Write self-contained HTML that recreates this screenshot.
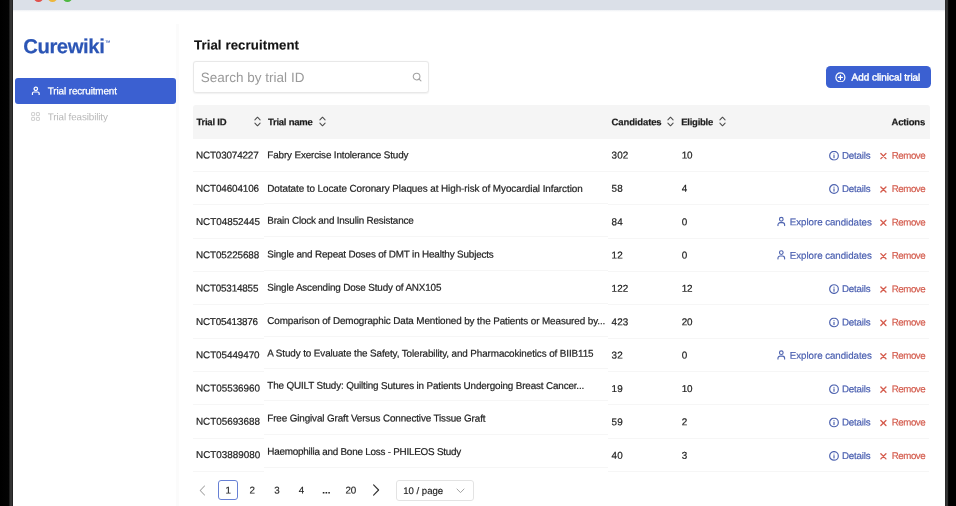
<!DOCTYPE html>
<html lang="en"><head><meta charset="utf-8"><title>Curewiki - Trial recruitment</title>
<style>
*{box-sizing:border-box;margin:0;padding:0}
html,body{width:956px;height:506px;overflow:hidden;background:#fff}
body{position:relative;font-family:"Liberation Sans",Arial,sans-serif;font-size:9.9px;color:#222}
.wrap{position:absolute;left:0;top:0;width:956px;height:506px;overflow:hidden;will-change:transform}
.abs{position:absolute}
.bl{position:absolute;left:0;top:0;width:13px;height:506px;background:linear-gradient(90deg,#000 0,#030303 8.8px,#333 10px,#343434 11.8px,#242424 12.2px,#222 13px)}
.br{position:absolute;left:945px;top:0;width:11px;height:506px;background:linear-gradient(90deg,#2a2a2a 0,#2c2c2c 0.9px,#353535 1.3px,#343434 2.4px,#080808 3.3px,#000 4.2px,#000 11px)}
.tb{position:absolute;left:13px;top:0;width:932px;height:9.5px;background:#dbe0e8}
.tl{position:absolute;top:-6.8px;width:8.6px;height:8.6px;border-radius:50%}
.side{position:absolute;left:176px;top:24px;width:3.4px;height:482px;background:#fbfbfb}
.tb2{position:absolute;left:13px;top:9.5px;width:932px;height:2.5px;background:linear-gradient(180deg,#eef1f5,#fff)}
.logo{position:absolute;font-weight:bold;font-size:20.3px;line-height:24px;color:#2b55b5;white-space:nowrap}
.tm{position:absolute;font-size:3.4px;line-height:4px;font-weight:bold;color:#2b55b5;letter-spacing:0}
.nav1{position:absolute;left:15.4px;top:77.6px;width:160.2px;height:26.2px;border-radius:3px;background:#3b60d1}
.navt{position:absolute;white-space:nowrap;line-height:12px}
.h1{position:absolute;font-size:13.2px;line-height:16px;font-weight:bold;color:#141414;white-space:nowrap;-webkit-text-stroke:0.15px #141414}
.search{position:absolute;left:193.4px;top:61.3px;width:235.8px;height:31.7px;border:1px solid #e8e8e8;border-radius:3px;background:#fff;box-shadow:0 0.5px 1.5px rgba(0,0,0,.06)}
.ph{position:absolute;font-size:13.5px;line-height:16px;color:#9a9a9a;white-space:nowrap}
.btn{position:absolute;left:825.8px;top:66.1px;width:105.2px;height:21.9px;border-radius:4.5px;background:#3b60d1}
.btnt{position:absolute;line-height:12px;color:#fff;white-space:nowrap;-webkit-text-stroke:0.4px #fff}
.thead{position:absolute;left:193.3px;top:105.1px;width:736.9px;height:33.7px;background:#f5f5f5;border-radius:3px 3px 0 0}
.th{position:absolute;font-weight:bold;font-size:9.5px;line-height:12px;color:#1c1c1c;white-space:nowrap;-webkit-text-stroke:0.2px #1c1c1c}
.sort{position:absolute;top:116.4px}
.line{position:absolute;height:1px;background:#f6f6f6}
.c{position:absolute;white-space:nowrap;line-height:12px;color:#222;-webkit-text-stroke:0.2px #222}
.cd{letter-spacing:0.05px}
.el{letter-spacing:-0.1px}
.act{position:absolute;white-space:nowrap;line-height:12px;font-size:9.7px;display:flex;align-items:center;justify-content:flex-end}
.act .ic{margin-right:3.4px;flex:none}
.act .xi{margin-right:5.3px}
.bluet{color:#4a5fb0;-webkit-text-stroke:0.2px #4a5fb0}
.redt{color:#d45f51;-webkit-text-stroke:0.2px #d45f51}
.gap{display:inline-block;width:9.2px}
.pg{position:absolute;line-height:12px;font-size:9.8px;color:#222;white-space:nowrap;-webkit-text-stroke:0.15px #222}
</style></head><body><div class="wrap">
<div class="tb"></div>
<div class="tl" style="left:34.2px;background:#e0524d"></div>
<div class="tl" style="left:48px;background:#edb73c"></div>
<div class="tl" style="left:63.2px;background:#4fb840"></div>
<div class="bl"></div><div class="br"></div>
<div class="side"></div><div class="tb2"></div>
<div class="logo" style="left:23px;top:34px;transform:matrix(1,0.0007,0,1,0.20,0.18);letter-spacing:-0.421px;-webkit-text-stroke:0.2px #2b55b5">Curewiki</div><div class="tm" style="left:105px;top:39px;transform:matrix(1,0.0007,0,1,0.20,0.67);">TM</div>
<div class="nav1"></div>
<div class="abs" style="left:31.2px;top:85.8px;width:9.6px;height:9.6px"><svg class="ic" width="9.6" height="9.6" viewBox="0 0 24 24" fill="none" stroke="#fff" stroke-width="3.0" stroke-linecap="round" stroke-linejoin="round" style="display:block"><circle cx="12" cy="7" r="4.3"/><path d="M3.6 22v-3.4a3.6 3.6 0 0 1 3.6-3.6h9.6a3.6 3.6 0 0 1 3.6 3.6v3.4"/></svg></div>
<div class="navt" style="left:47px;top:85px;transform:matrix(1,0.0007,0,1,0.80,0.31);color:#fff;-webkit-text-stroke:0.25px #fff;letter-spacing:-0.111px">Trial recruitment</div>
<svg class="abs" style="left:31px;top:111.8px" width="9" height="9" viewBox="0 0 9 9" fill="none" stroke="#c6c6c6" stroke-width="0.85"><rect x="0.6" y="0.6" width="3" height="3" rx="0.4"/><rect x="5.4" y="0.6" width="3" height="3" rx="0.4"/><rect x="0.6" y="5.4" width="3" height="3" rx="0.4"/><rect x="5.4" y="5.4" width="3" height="3" rx="0.4"/></svg>
<div class="navt" style="left:47px;top:111px;transform:matrix(1,0.0007,0,1,0.80,0.21);color:#b8b8b8;letter-spacing:-0.131px">Trial feasibility</div>
<div class="h1" style="left:194px;top:37px;transform:matrix(1,0.0007,0,1,0.00,0.44);letter-spacing:0.104px">Trial recruitment</div>
<div class="search"></div><div class="ph" style="left:200px;top:69px;transform:matrix(1,0.0007,0,1,0.70,0.94);letter-spacing:0.009px">Search by trial ID</div>
<svg class="abs" style="left:411.8px;top:72.4px" width="10" height="10" viewBox="0 0 24 24" fill="none" stroke="#a3a3a3" stroke-width="2.6" stroke-linecap="round"><circle cx="11" cy="11" r="8"/><path d="M17 17L21.5 21.5"/></svg>
<div class="btn"></div>
<svg class="abs" style="left:835.3px;top:71.7px" width="10.8" height="10.8" viewBox="0 0 24 24" fill="none" stroke="#fff" stroke-width="2.7" stroke-linecap="round"><circle cx="12" cy="12" r="10"/><path d="M12 7.5v9M7.5 12h9"/></svg>
<div class="btnt" style="left:851px;top:71px;transform:matrix(1,0.0007,0,1,0.60,0.61);letter-spacing:0.005px">Add clinical trial</div>
<div class="thead"></div>
<div class="th" style="left:196px;top:116px;transform:matrix(1,0.0007,0,1,0.40,0.17);letter-spacing:-0.227px">Trial ID</div><svg class="sort" style="left:253.6px" width="7" height="11" viewBox="0 0 7 11"><path d="M0.9 3.9 L3.5 1.2 L6.1 3.9 M0.9 7.1 L3.5 9.8 L6.1 7.1" fill="none" stroke="#4d4d4d" stroke-width="1.05" stroke-linecap="round" stroke-linejoin="round"/></svg><div class="th" style="left:267px;top:116px;transform:matrix(1,0.0007,0,1,0.90,0.17);letter-spacing:-0.233px">Trial name</div><svg class="sort" style="left:319px" width="7" height="11" viewBox="0 0 7 11"><path d="M0.9 3.9 L3.5 1.2 L6.1 3.9 M0.9 7.1 L3.5 9.8 L6.1 7.1" fill="none" stroke="#4d4d4d" stroke-width="1.05" stroke-linecap="round" stroke-linejoin="round"/></svg><div class="th" style="left:611px;top:116px;transform:matrix(1,0.0007,0,1,0.60,0.17);letter-spacing:-0.135px">Candidates</div><svg class="sort" style="left:667px" width="7" height="11" viewBox="0 0 7 11"><path d="M0.9 3.9 L3.5 1.2 L6.1 3.9 M0.9 7.1 L3.5 9.8 L6.1 7.1" fill="none" stroke="#4d4d4d" stroke-width="1.05" stroke-linecap="round" stroke-linejoin="round"/></svg><div class="th" style="left:681px;top:116px;transform:matrix(1,0.0007,0,1,0.20,0.17);letter-spacing:-0.242px">Eligible</div><svg class="sort" style="left:718.5px" width="7" height="11" viewBox="0 0 7 11"><path d="M0.9 3.9 L3.5 1.2 L6.1 3.9 M0.9 7.1 L3.5 9.8 L6.1 7.1" fill="none" stroke="#4d4d4d" stroke-width="1.05" stroke-linecap="round" stroke-linejoin="round"/></svg><div class="th" style="left:891px;top:116px;transform:matrix(1,0.0007,0,1,0.60,0.17);letter-spacing:-0.207px">Actions</div>
<div class="c id" style="left:196px;top:149px;transform:matrix(1,0.0007,0,1,0.00,0.41);letter-spacing:-0.153px">NCT03074227</div><div class="c nm" style="left:267px;top:149px;transform:matrix(1,0.0007,0,1,0.30,0.31);letter-spacing:-0.137px">Fabry Exercise Intolerance Study</div><div class="c cd" style="left:611px;top:149px;transform:matrix(1,0.0007,0,1,0.60,0.41);">302</div><div class="c el" style="left:681px;top:149px;transform:matrix(1,0.0007,0,1,0.70,0.41);">10</div><div class="act" style="left:700px;width:225.6px;top:149px;transform:matrix(1,0.0007,0,1,0,0.64);"><svg class="ic" width="10" height="10" viewBox="0 0 24 24" fill="none" stroke="#4f64b0" stroke-width="2.9" stroke-linecap="round" stroke-linejoin="round"><circle cx="12" cy="12" r="10.4"/><path d="M12 17v-5.5M12 7.5h.01"/></svg><span class="bluet" style="letter-spacing:-0.154px">Details</span><span class="gap"></span><svg class="ic xi" width="6.8" height="6.8" viewBox="0 0 24 24" fill="none" stroke="#d55d4f" stroke-width="4.8" style="overflow:visible" stroke-linecap="round"><path d="M3 3l18 18M21 3L3 21"/></svg><span class="redt" style="letter-spacing:-0.456px;margin-right:0.456px">Remove</span></div><div class="line" style="left:193.3px;width:71.1px;top:171.0px"></div><div class="line" style="left:264.4px;width:343.6px;top:171.0px"></div><div class="line" style="left:608px;width:321px;top:171.0px"></div>
<div class="c id" style="left:196px;top:182px;transform:matrix(1,0.0007,0,1,0.00,0.71);letter-spacing:-0.123px">NCT04604106</div><div class="c nm" style="left:267px;top:182px;transform:matrix(1,0.0007,0,1,0.30,0.81);letter-spacing:-0.064px">Dotatate to Locate Coronary Plaques at High-risk of Myocardial Infarction</div><div class="c cd" style="left:611px;top:182px;transform:matrix(1,0.0007,0,1,0.60,0.77);">58</div><div class="c el" style="left:681px;top:182px;transform:matrix(1,0.0007,0,1,0.70,0.77);">4</div><div class="act" style="left:700px;width:225.6px;top:182px;transform:matrix(1,0.0007,0,1,0,1.00);"><svg class="ic" width="10" height="10" viewBox="0 0 24 24" fill="none" stroke="#4f64b0" stroke-width="2.9" stroke-linecap="round" stroke-linejoin="round"><circle cx="12" cy="12" r="10.4"/><path d="M12 17v-5.5M12 7.5h.01"/></svg><span class="bluet" style="letter-spacing:-0.154px">Details</span><span class="gap"></span><svg class="ic xi" width="6.8" height="6.8" viewBox="0 0 24 24" fill="none" stroke="#d55d4f" stroke-width="4.8" style="overflow:visible" stroke-linecap="round"><path d="M3 3l18 18M21 3L3 21"/></svg><span class="redt" style="letter-spacing:-0.456px;margin-right:0.456px">Remove</span></div><div class="line" style="left:193.3px;width:71.1px;top:204.3px"></div><div class="line" style="left:264.4px;width:343.6px;top:203.3px"></div><div class="line" style="left:608px;width:321px;top:204.3px"></div>
<div class="c id" style="left:196px;top:216px;transform:matrix(1,0.0007,0,1,0.00,0.01);letter-spacing:-0.023px">NCT04852445</div><div class="c nm" style="left:267px;top:214px;transform:matrix(1,0.0007,0,1,0.30,0.81);letter-spacing:-0.188px">Brain Clock and Insulin Resistance</div><div class="c cd" style="left:611px;top:216px;transform:matrix(1,0.0007,0,1,0.60,0.13);">84</div><div class="c el" style="left:681px;top:216px;transform:matrix(1,0.0007,0,1,0.70,0.13);">0</div><div class="act" style="left:700px;width:225.6px;top:216px;transform:matrix(1,0.0007,0,1,0,0.36);"><svg class="ic" width="8.6" height="10" viewBox="0 0 20 24" fill="none" stroke="#4f64b0" stroke-width="2.7" stroke-linecap="round" stroke-linejoin="round" style="margin-right:3.9px;position:relative;top:-0.8px"><circle cx="10" cy="7" r="4.4"/><path d="M2 22.6v-2.2a5.2 5.2 0 0 1 5.2-5.2h5.6a5.2 5.2 0 0 1 5.2 5.2v2.2"/></svg><span class="bluet" style="letter-spacing:-0.024px;margin-right:-1.3px">Explore candidates</span><span class="gap"></span><svg class="ic xi" width="6.8" height="6.8" viewBox="0 0 24 24" fill="none" stroke="#d55d4f" stroke-width="4.8" style="overflow:visible" stroke-linecap="round"><path d="M3 3l18 18M21 3L3 21"/></svg><span class="redt" style="letter-spacing:-0.456px;margin-right:0.456px">Remove</span></div><div class="line" style="left:193.3px;width:71.1px;top:237.7px"></div><div class="line" style="left:264.4px;width:343.6px;top:236.4px"></div><div class="line" style="left:608px;width:321px;top:237.7px"></div>
<div class="c id" style="left:196px;top:249px;transform:matrix(1,0.0007,0,1,0.00,0.31);letter-spacing:-0.103px">NCT05225688</div><div class="c nm" style="left:267px;top:248px;transform:matrix(1,0.0007,0,1,0.30,0.56);letter-spacing:-0.157px">Single and Repeat Doses of DMT in Healthy Subjects</div><div class="c cd" style="left:611px;top:249px;transform:matrix(1,0.0007,0,1,0.60,0.49);">12</div><div class="c el" style="left:681px;top:249px;transform:matrix(1,0.0007,0,1,0.70,0.49);">0</div><div class="act" style="left:700px;width:225.6px;top:249px;transform:matrix(1,0.0007,0,1,0,0.72);"><svg class="ic" width="8.6" height="10" viewBox="0 0 20 24" fill="none" stroke="#4f64b0" stroke-width="2.7" stroke-linecap="round" stroke-linejoin="round" style="margin-right:3.9px;position:relative;top:-0.8px"><circle cx="10" cy="7" r="4.4"/><path d="M2 22.6v-2.2a5.2 5.2 0 0 1 5.2-5.2h5.6a5.2 5.2 0 0 1 5.2 5.2v2.2"/></svg><span class="bluet" style="letter-spacing:-0.024px;margin-right:-1.3px">Explore candidates</span><span class="gap"></span><svg class="ic xi" width="6.8" height="6.8" viewBox="0 0 24 24" fill="none" stroke="#d55d4f" stroke-width="4.8" style="overflow:visible" stroke-linecap="round"><path d="M3 3l18 18M21 3L3 21"/></svg><span class="redt" style="letter-spacing:-0.456px;margin-right:0.456px">Remove</span></div><div class="line" style="left:193.3px;width:71.1px;top:271.0px"></div><div class="line" style="left:264.4px;width:343.6px;top:269.6px"></div><div class="line" style="left:608px;width:321px;top:271.0px"></div>
<div class="c id" style="left:196px;top:282px;transform:matrix(1,0.0007,0,1,0.00,0.61);letter-spacing:-0.183px">NCT05314855</div><div class="c nm" style="left:267px;top:281px;transform:matrix(1,0.0007,0,1,0.30,0.81);letter-spacing:-0.150px">Single Ascending Dose Study of ANX105</div><div class="c cd" style="left:611px;top:282px;transform:matrix(1,0.0007,0,1,0.60,0.85);">122</div><div class="c el" style="left:681px;top:282px;transform:matrix(1,0.0007,0,1,0.70,0.85);">12</div><div class="act" style="left:700px;width:225.6px;top:283px;transform:matrix(1,0.0007,0,1,0,0.08);"><svg class="ic" width="10" height="10" viewBox="0 0 24 24" fill="none" stroke="#4f64b0" stroke-width="2.9" stroke-linecap="round" stroke-linejoin="round"><circle cx="12" cy="12" r="10.4"/><path d="M12 17v-5.5M12 7.5h.01"/></svg><span class="bluet" style="letter-spacing:-0.154px">Details</span><span class="gap"></span><svg class="ic xi" width="6.8" height="6.8" viewBox="0 0 24 24" fill="none" stroke="#d55d4f" stroke-width="4.8" style="overflow:visible" stroke-linecap="round"><path d="M3 3l18 18M21 3L3 21"/></svg><span class="redt" style="letter-spacing:-0.456px;margin-right:0.456px">Remove</span></div><div class="line" style="left:193.3px;width:71.1px;top:304.4px"></div><div class="line" style="left:264.4px;width:343.6px;top:302.9px"></div><div class="line" style="left:608px;width:321px;top:304.4px"></div>
<div class="c id" style="left:196px;top:315px;transform:matrix(1,0.0007,0,1,0.00,0.91);letter-spacing:-0.223px">NCT05413876</div><div class="c nm" style="left:267px;top:315px;transform:matrix(1,0.0007,0,1,0.30,0.11);letter-spacing:-0.097px">Comparison of Demographic Data Mentioned by the Patients or Measured by...</div><div class="c cd" style="left:611px;top:316px;transform:matrix(1,0.0007,0,1,0.60,0.21);">423</div><div class="c el" style="left:681px;top:316px;transform:matrix(1,0.0007,0,1,0.70,0.21);">20</div><div class="act" style="left:700px;width:225.6px;top:316px;transform:matrix(1,0.0007,0,1,0,0.44);"><svg class="ic" width="10" height="10" viewBox="0 0 24 24" fill="none" stroke="#4f64b0" stroke-width="2.9" stroke-linecap="round" stroke-linejoin="round"><circle cx="12" cy="12" r="10.4"/><path d="M12 17v-5.5M12 7.5h.01"/></svg><span class="bluet" style="letter-spacing:-0.154px">Details</span><span class="gap"></span><svg class="ic xi" width="6.8" height="6.8" viewBox="0 0 24 24" fill="none" stroke="#d55d4f" stroke-width="4.8" style="overflow:visible" stroke-linecap="round"><path d="M3 3l18 18M21 3L3 21"/></svg><span class="redt" style="letter-spacing:-0.456px;margin-right:0.456px">Remove</span></div><div class="line" style="left:193.3px;width:71.1px;top:337.7px"></div><div class="line" style="left:264.4px;width:343.6px;top:336.1px"></div><div class="line" style="left:608px;width:321px;top:337.7px"></div>
<div class="c id" style="left:196px;top:349px;transform:matrix(1,0.0007,0,1,0.00,0.21);letter-spacing:-0.063px">NCT05449470</div><div class="c nm" style="left:267px;top:347px;transform:matrix(1,0.0007,0,1,0.30,0.66);letter-spacing:-0.111px">A Study to Evaluate the Safety, Tolerability, and Pharmacokinetics of BIIB115</div><div class="c cd" style="left:611px;top:349px;transform:matrix(1,0.0007,0,1,0.60,0.57);">32</div><div class="c el" style="left:681px;top:349px;transform:matrix(1,0.0007,0,1,0.70,0.57);">0</div><div class="act" style="left:700px;width:225.6px;top:349px;transform:matrix(1,0.0007,0,1,0,0.80);"><svg class="ic" width="8.6" height="10" viewBox="0 0 20 24" fill="none" stroke="#4f64b0" stroke-width="2.7" stroke-linecap="round" stroke-linejoin="round" style="margin-right:3.9px;position:relative;top:-0.8px"><circle cx="10" cy="7" r="4.4"/><path d="M2 22.6v-2.2a5.2 5.2 0 0 1 5.2-5.2h5.6a5.2 5.2 0 0 1 5.2 5.2v2.2"/></svg><span class="bluet" style="letter-spacing:-0.024px;margin-right:-1.3px">Explore candidates</span><span class="gap"></span><svg class="ic xi" width="6.8" height="6.8" viewBox="0 0 24 24" fill="none" stroke="#d55d4f" stroke-width="4.8" style="overflow:visible" stroke-linecap="round"><path d="M3 3l18 18M21 3L3 21"/></svg><span class="redt" style="letter-spacing:-0.456px;margin-right:0.456px">Remove</span></div><div class="line" style="left:193.3px;width:71.1px;top:371.0px"></div><div class="line" style="left:264.4px;width:343.6px;top:368.4px"></div><div class="line" style="left:608px;width:321px;top:371.0px"></div>
<div class="c id" style="left:196px;top:382px;transform:matrix(1,0.0007,0,1,0.00,0.51);letter-spacing:-0.023px">NCT05536960</div><div class="c nm" style="left:267px;top:379px;transform:matrix(1,0.0007,0,1,0.30,0.91);letter-spacing:-0.151px">The QUILT Study: Quilting Sutures in Patients Undergoing Breast Cancer...</div><div class="c cd" style="left:611px;top:382px;transform:matrix(1,0.0007,0,1,0.60,0.93);">19</div><div class="c el" style="left:681px;top:382px;transform:matrix(1,0.0007,0,1,0.70,0.93);">10</div><div class="act" style="left:700px;width:225.6px;top:383px;transform:matrix(1,0.0007,0,1,0,0.16);"><svg class="ic" width="10" height="10" viewBox="0 0 24 24" fill="none" stroke="#4f64b0" stroke-width="2.9" stroke-linecap="round" stroke-linejoin="round"><circle cx="12" cy="12" r="10.4"/><path d="M12 17v-5.5M12 7.5h.01"/></svg><span class="bluet" style="letter-spacing:-0.154px">Details</span><span class="gap"></span><svg class="ic xi" width="6.8" height="6.8" viewBox="0 0 24 24" fill="none" stroke="#d55d4f" stroke-width="4.8" style="overflow:visible" stroke-linecap="round"><path d="M3 3l18 18M21 3L3 21"/></svg><span class="redt" style="letter-spacing:-0.456px;margin-right:0.456px">Remove</span></div><div class="line" style="left:193.3px;width:71.1px;top:404.4px"></div><div class="line" style="left:264.4px;width:343.6px;top:400.4px"></div><div class="line" style="left:608px;width:321px;top:404.4px"></div>
<div class="c id" style="left:196px;top:415px;transform:matrix(1,0.0007,0,1,0.00,0.81);letter-spacing:-0.023px">NCT05693688</div><div class="c nm" style="left:267px;top:412px;transform:matrix(1,0.0007,0,1,0.30,0.56);letter-spacing:-0.128px">Free Gingival Graft Versus Connective Tissue Graft</div><div class="c cd" style="left:611px;top:416px;transform:matrix(1,0.0007,0,1,0.60,0.29);">59</div><div class="c el" style="left:681px;top:416px;transform:matrix(1,0.0007,0,1,0.70,0.29);">2</div><div class="act" style="left:700px;width:225.6px;top:416px;transform:matrix(1,0.0007,0,1,0,0.52);"><svg class="ic" width="10" height="10" viewBox="0 0 24 24" fill="none" stroke="#4f64b0" stroke-width="2.9" stroke-linecap="round" stroke-linejoin="round"><circle cx="12" cy="12" r="10.4"/><path d="M12 17v-5.5M12 7.5h.01"/></svg><span class="bluet" style="letter-spacing:-0.154px">Details</span><span class="gap"></span><svg class="ic xi" width="6.8" height="6.8" viewBox="0 0 24 24" fill="none" stroke="#d55d4f" stroke-width="4.8" style="overflow:visible" stroke-linecap="round"><path d="M3 3l18 18M21 3L3 21"/></svg><span class="redt" style="letter-spacing:-0.456px;margin-right:0.456px">Remove</span></div><div class="line" style="left:193.3px;width:71.1px;top:437.7px"></div><div class="line" style="left:264.4px;width:343.6px;top:433.7px"></div><div class="line" style="left:608px;width:321px;top:437.7px"></div>
<div class="c id" style="left:196px;top:449px;transform:matrix(1,0.0007,0,1,0.00,0.11);letter-spacing:-0.003px">NCT03889080</div><div class="c nm" style="left:267px;top:445px;transform:matrix(1,0.0007,0,1,0.30,0.91);letter-spacing:-0.228px">Haemophilia and Bone Loss - PHILEOS Study</div><div class="c cd" style="left:611px;top:449px;transform:matrix(1,0.0007,0,1,0.60,0.65);">40</div><div class="c el" style="left:681px;top:449px;transform:matrix(1,0.0007,0,1,0.70,0.65);">3</div><div class="act" style="left:700px;width:225.6px;top:449px;transform:matrix(1,0.0007,0,1,0,0.88);"><svg class="ic" width="10" height="10" viewBox="0 0 24 24" fill="none" stroke="#4f64b0" stroke-width="2.9" stroke-linecap="round" stroke-linejoin="round"><circle cx="12" cy="12" r="10.4"/><path d="M12 17v-5.5M12 7.5h.01"/></svg><span class="bluet" style="letter-spacing:-0.154px">Details</span><span class="gap"></span><svg class="ic xi" width="6.8" height="6.8" viewBox="0 0 24 24" fill="none" stroke="#d55d4f" stroke-width="4.8" style="overflow:visible" stroke-linecap="round"><path d="M3 3l18 18M21 3L3 21"/></svg><span class="redt" style="letter-spacing:-0.456px;margin-right:0.456px">Remove</span></div><div class="line" style="left:193.3px;width:71.1px;top:471.1px"></div><div class="line" style="left:264.4px;width:343.6px;top:466.7px"></div><div class="line" style="left:608px;width:321px;top:471.1px"></div>
<svg class="abs" style="left:199px;top:484.5px" width="7" height="11" viewBox="0 0 7 11" fill="none" stroke="#a6a6a6" stroke-width="1.05" stroke-linecap="round" stroke-linejoin="round"><path d="M5.5 1L1.2 5.5L5.5 10"/></svg>
<div class="abs" style="left:218.4px;top:480.4px;width:19.2px;height:19.2px;border:1px solid #6780d4;border-radius:3px"></div>
<div class="pg" style="left:225px;top:484px;transform:matrix(1,0.0007,0,1,0.60,0.57);">1</div><div class="pg" style="left:249px;top:484px;transform:matrix(1,0.0007,0,1,0.60,0.57);">2</div><div class="pg" style="left:274px;top:484px;transform:matrix(1,0.0007,0,1,0.20,0.57);">3</div><div class="pg" style="left:298px;top:484px;transform:matrix(1,0.0007,0,1,0.80,0.57);">4</div><div class="pg" style="left:322px;top:484px;transform:matrix(1,0.0007,0,1,0.20,0.57);"><b>...</b></div><div class="pg" style="left:345px;top:484px;transform:matrix(1,0.0007,0,1,0.40,0.57);">20</div><svg class="abs" style="left:371.6px;top:484px" width="8" height="12" viewBox="0 0 8 12" fill="none" stroke="#333" stroke-width="1.15" stroke-linecap="round" stroke-linejoin="round"><path d="M1.6 0.9L6.6 6L1.6 11.1"/></svg>
<div class="abs" style="left:396.4px;top:480.2px;width:77.4px;height:20.4px;border:1px solid #e3e3e3;border-radius:3px"></div>
<div class="pg" style="left:403px;top:485px;transform:matrix(1,0.0007,0,1,0.20,0.00);font-size:9.6px">10 / page</div><svg class="abs" style="left:456px;top:488px" width="9" height="6" viewBox="0 0 9 6" fill="none" stroke="#9a9a9a" stroke-width="0.9" stroke-linecap="round" stroke-linejoin="round"><path d="M1 1L4.5 4.6L8 1"/></svg>
</div></body></html>
